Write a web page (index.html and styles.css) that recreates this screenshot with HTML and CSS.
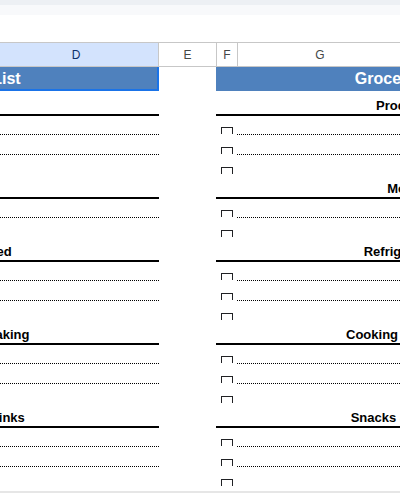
FILE: index.html
```html
<!DOCTYPE html>
<html lang="en">
<head>
<meta charset="utf-8">
<title>Grocery List</title>
<link rel="stylesheet" href="styles.css">
</head>
<body>
<div class="chrome-top"></div>
<div class="chrome-sub"></div>
<div class="formula-gap"></div>
<div class="colheads">
  <div class="colhead colhead-d selected">D</div>
  <div class="colhead colhead-e">E</div>
  <div class="colhead colhead-f">F</div>
  <div class="colhead colhead-g">G</div>
</div>
<div class="sheet">
  <div class="list list-left">
    <div class="list-title selected">Grocery List</div>
    <div class="sec-head">Produce</div>
    <div class="item"><div class="box-cell"><span class="box"></span></div><div class="line"></div></div>
    <div class="item"><div class="box-cell"><span class="box"></span></div><div class="line"></div></div>
    <div class="item last"><div class="box-cell"><span class="box"></span></div><div class="line"></div></div>
    <div class="sec-head">Meat</div>
    <div class="item"><div class="box-cell"><span class="box"></span></div><div class="line"></div></div>
    <div class="item last"><div class="box-cell"><span class="box"></span></div><div class="line"></div></div>
    <div class="sec-head">Refrigerated</div>
    <div class="item"><div class="box-cell"><span class="box"></span></div><div class="line"></div></div>
    <div class="item"><div class="box-cell"><span class="box"></span></div><div class="line"></div></div>
    <div class="item last"><div class="box-cell"><span class="box"></span></div><div class="line"></div></div>
    <div class="sec-head">Cooking &amp; Baking</div>
    <div class="item"><div class="box-cell"><span class="box"></span></div><div class="line"></div></div>
    <div class="item"><div class="box-cell"><span class="box"></span></div><div class="line"></div></div>
    <div class="item last"><div class="box-cell"><span class="box"></span></div><div class="line"></div></div>
    <div class="sec-head">Snacks &amp; Drinks</div>
    <div class="item"><div class="box-cell"><span class="box"></span></div><div class="line"></div></div>
    <div class="item"><div class="box-cell"><span class="box"></span></div><div class="line"></div></div>
    <div class="item last"><div class="box-cell"><span class="box"></span></div><div class="line"></div></div>
  </div>
  <div class="list list-right">
    <div class="list-title">Grocery List</div>
    <div class="sec-head">Produce</div>
    <div class="item"><div class="box-cell"><span class="box"></span></div><div class="line"></div></div>
    <div class="item"><div class="box-cell"><span class="box"></span></div><div class="line"></div></div>
    <div class="item last"><div class="box-cell"><span class="box"></span></div><div class="line"></div></div>
    <div class="sec-head">Meat</div>
    <div class="item"><div class="box-cell"><span class="box"></span></div><div class="line"></div></div>
    <div class="item last"><div class="box-cell"><span class="box"></span></div><div class="line"></div></div>
    <div class="sec-head">Refrigerated</div>
    <div class="item"><div class="box-cell"><span class="box"></span></div><div class="line"></div></div>
    <div class="item"><div class="box-cell"><span class="box"></span></div><div class="line"></div></div>
    <div class="item last"><div class="box-cell"><span class="box"></span></div><div class="line"></div></div>
    <div class="sec-head">Cooking &amp; Baking</div>
    <div class="item"><div class="box-cell"><span class="box"></span></div><div class="line"></div></div>
    <div class="item"><div class="box-cell"><span class="box"></span></div><div class="line"></div></div>
    <div class="item last"><div class="box-cell"><span class="box"></span></div><div class="line"></div></div>
    <div class="sec-head">Snacks &amp; Drinks</div>
    <div class="item"><div class="box-cell"><span class="box"></span></div><div class="line"></div></div>
    <div class="item"><div class="box-cell"><span class="box"></span></div><div class="line"></div></div>
    <div class="item last"><div class="box-cell"><span class="box"></span></div><div class="line"></div></div>
  </div>
</div>
<div class="scrollbar"></div>
</body>
</html>
```
FILE: styles.css
```css
* { box-sizing: border-box; }
html, body {
  margin: 0;
  padding: 0;
  width: 400px;
  height: 493px;
  overflow: hidden;
  background: #ffffff;
  font-family: "Liberation Sans", Arial, sans-serif;
}
.chrome-top { height: 5px; background: #edf0f4; }
.chrome-sub { height: 10px; background: #f8f9fb; }
.formula-gap { height: 27px; background: #ffffff; }

.colheads {
  display: flex;
  height: 25px;
  margin-left: -6px;
  border-top: 1px solid #c7c7c7;
  border-bottom: 1px solid #c7c7c7;
}
.colhead {
  flex: none;
  display: flex;
  align-items: center;
  justify-content: center;
  border-right: 1px solid #c7c7c7;
  font-family: "Liberation Sans", Arial, sans-serif;
  font-size: 12px;
  color: #444746;
}
.colhead-d { width: 165px; }
.colhead-e { width: 58px; }
.colhead-f { width: 21px; }
.colhead-g { width: 165px; }
.colhead.selected { background: #d3e3fd; color: #0b2f6b; }

.sheet {
  display: flex;
  gap: 57px;
  height: 424px;
  width: 400px;
  overflow: hidden;
}
.list {
  flex: none;
  display: flex;
  flex-direction: column;
}
.list-left { width: 371px; margin-left: -212px; }
.list-right { width: 372px; }

.list-title {
  height: 24px;
  margin-bottom: 1px;
  background: #4f81bd;
  color: #ffffff;
  font-weight: bold;
  font-size: 16px;
  display: flex;
  align-items: center;
  justify-content: center;
  white-space: nowrap;
}
.list-title.selected { box-shadow: inset -2px -2px 0 #1a73e8; }

.sec-head {
  flex: none;
  height: 23px;
  border-bottom: 1px solid #000000;
  box-shadow: 0 1px 0 #000000;
  display: flex;
  align-items: flex-end;
  justify-content: center;
  font-weight: bold;
  font-size: 13px;
  line-height: 15px;
  padding-bottom: 1px;
  color: #000000;
  white-space: nowrap;
}

.item {
  flex: none;
  display: flex;
  height: 20px;
}
.box-cell {
  flex: none;
  width: 21px;
  display: flex;
  align-items: flex-end;
  border-bottom: 1px solid transparent;
}
.box {
  display: block;
  margin-left: 5px;
  width: 12px;
  height: 7px;
  border: 1px solid #202124;
  border-bottom: 0;
}
.line {
  flex: 1;
  border-bottom: 1px dotted #000000;
}
.item.last .line { border-bottom-color: transparent; }

.scrollbar { height: 2px; background: #e6e6e6; }
```
